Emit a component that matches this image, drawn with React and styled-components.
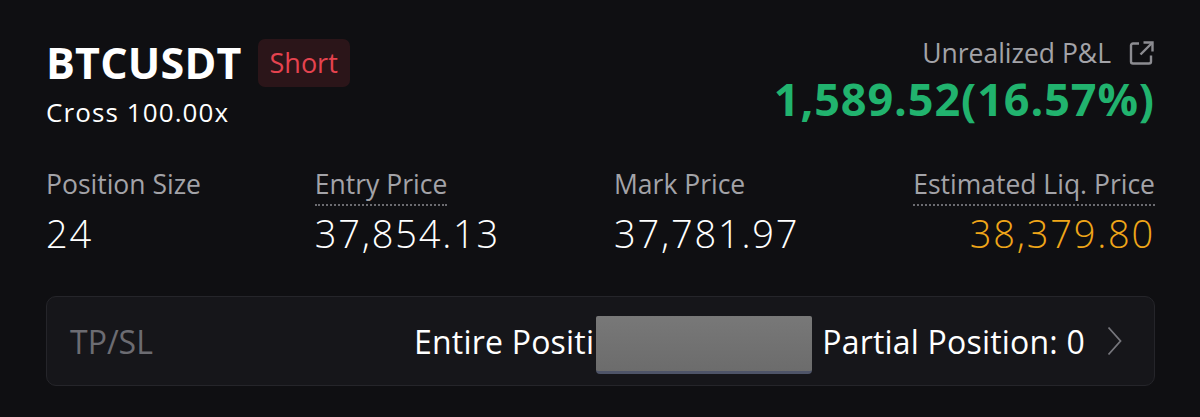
import React from "react";
import styled, { createGlobalStyle } from "styled-components";

const GlobalStyle = createGlobalStyle`
  body {
    margin: 0;
    background: #0f0f12;
    font-family: "Open Sans", "Noto Sans", sans-serif;
    color: #ffffff;
  }
`;

const Page = styled.div`
  width: 1200px;
  height: 417px;
  box-sizing: border-box;
  padding: 34px 45px 0 46px;
  background: #0f0f12;
`;

const TopRow = styled.div`
  display: flex;
  justify-content: space-between;
  align-items: flex-start;
`;

const SymbolLine = styled.div`
  display: flex;
  align-items: center;
  gap: 16px;
`;

const Symbol = styled.div`
  font-size: 43px;
  font-weight: 700;
  letter-spacing: 0.2px;
  line-height: 58px;
`;

const SideBadge = styled.div`
  background: #2b1519;
  color: #e5434f;
  font-size: 27px;
  line-height: 48px;
  padding: 0 12px;
  border-radius: 7px;
`;

const Leverage = styled.div`
  font-size: 26px;
  letter-spacing: 1.1px;
  line-height: 32px;
  margin-top: 4px;
`;

const PnlBlock = styled.div`
  display: flex;
  flex-direction: column;
  align-items: flex-end;
`;

const PnlLabel = styled.div`
  display: flex;
  align-items: center;
  gap: 17px;
  color: #a3a3a8;
  font-size: 26.5px;
  line-height: 38px;
`;

const PnlValue = styled.div`
  color: #21b36e;
  font-size: 45px;
  font-weight: 700;
  letter-spacing: 0.9px;
  line-height: 54px;
`;

const StatsRow = styled.div`
  display: flex;
  justify-content: space-between;
  margin-top: 39px;
`;

const Stat = styled.div`
  display: flex;
  flex-direction: column;
  align-items: ${(p) => (p.$right ? "flex-end" : "flex-start")};
`;

const StatLabel = styled.div`
  color: #a3a3a8;
  font-size: 26.5px;
  line-height: 34px;
  padding-bottom: 3px;
  border-bottom: 2px dotted ${(p) => (p.$dotted ? "#6b6b70" : "transparent")};
`;

const StatValue = styled.div`
  color: ${(p) => p.$color || "#ffffff"};
  font-size: 38px;
  font-weight: 300;
  letter-spacing: 1.8px;
  line-height: 44px;
  margin-top: 5px;
`;

const TpslCard = styled.div`
  margin-top: 41px;
  height: 90px;
  box-sizing: border-box;
  border: 1px solid #25252a;
  border-radius: 10px;
  background: #16161a;
  display: flex;
  align-items: center;
  justify-content: space-between;
  padding: 0 32px 0 23px;
`;

const TpslLabel = styled.div`
  color: #6c6c72;
  font-size: 32px;
`;

const TpslInfo = styled.div`
  display: flex;
  align-items: center;
  font-size: 32px;
  letter-spacing: 0.2px;
  color: #ffffff;
`;

const Redaction = styled.span`
  display: inline-block;
  width: 216px;
  height: 58px;
  margin: 8px 10px 0 2px;
  box-sizing: border-box;
  background: linear-gradient(#787878, #6c6c6c);
  border-bottom: 3px solid #4e5468;
  border-radius: 2px 2px 4px 4px;
`;

const Chevron = styled.svg`
  margin-left: 22px;
`;

const ExternalIcon = () => (
  <svg width="27" height="27" viewBox="0 0 27 27" fill="none" stroke="#8c8c91" strokeWidth="2.4">
    <path d="M11 3.5H5a2 2 0 0 0-2 2v16a2 2 0 0 0 2 2h16a2 2 0 0 0 2-2v-6" />
    <path d="M15.5 2.5h9v9" />
    <path d="M24.5 2.5L12.5 14.5" />
  </svg>
);

export default function App() {
  return (
    <Page>
      <GlobalStyle />
      <TopRow>
        <div>
          <SymbolLine>
            <Symbol>BTCUSDT</Symbol>
            <SideBadge>Short</SideBadge>
          </SymbolLine>
          <Leverage>Cross 100.00x</Leverage>
        </div>
        <PnlBlock>
          <PnlLabel>
            Unrealized P&amp;L
            <ExternalIcon />
          </PnlLabel>
          <PnlValue>1,589.52(16.57%)</PnlValue>
        </PnlBlock>
      </TopRow>

      <StatsRow>
        <Stat>
          <StatLabel>Position Size</StatLabel>
          <StatValue>24</StatValue>
        </Stat>
        <Stat>
          <StatLabel $dotted>Entry Price</StatLabel>
          <StatValue>37,854.13</StatValue>
        </Stat>
        <Stat>
          <StatLabel>Mark Price</StatLabel>
          <StatValue>37,781.97</StatValue>
        </Stat>
        <Stat $right>
          <StatLabel $dotted>Estimated Liq. Price</StatLabel>
          <StatValue $color="#f0a619">38,379.80</StatValue>
        </Stat>
      </StatsRow>

      <TpslCard>
        <TpslLabel>TP/SL</TpslLabel>
        <TpslInfo>
          Entire Positi
          <Redaction />
          Partial Position: 0
          <Chevron width="15" height="30" viewBox="0 0 15 30" fill="none" stroke="#76767c" strokeWidth="1.8">
            <path d="M1.5 1.5L13.5 15L1.5 28.5" />
          </Chevron>
        </TpslInfo>
      </TpslCard>
    </Page>
  );
}
